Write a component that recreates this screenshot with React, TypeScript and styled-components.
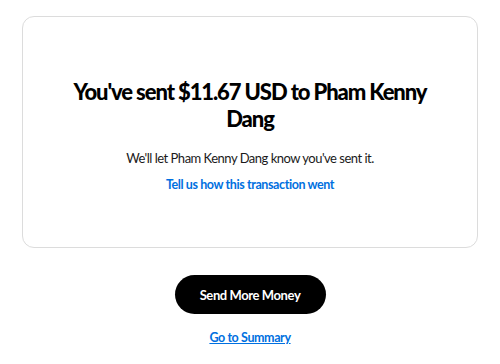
import React from "react";
import styled, { createGlobalStyle } from "styled-components";

const GlobalStyle = createGlobalStyle`
  body {
    margin: 0;
    background: #ffffff;
    font-family: Lato, "Liberation Sans", sans-serif;
    color: #000000;
  }
`;

const Page = styled.div`
  width: 500px;
  padding-top: 16px;
  display: flex;
  flex-direction: column;
  align-items: center;
`;

const Card = styled.div`
  box-sizing: border-box;
  width: 456px;
  height: 232px;
  border: 1px solid #dcdcdc;
  border-radius: 12px;
  padding: 61px 30px 0;
  display: flex;
  flex-direction: column;
  align-items: center;
  text-align: center;
`;

const Title = styled.h1`
  margin: 0;
  max-width: 380px;
  font-size: 22px;
  line-height: 27px;
  font-weight: 900;
  letter-spacing: -1.1px;
`;

const Message = styled.p`
  margin: 16px 0 0;
  font-size: 13px;
  line-height: 20px;
  letter-spacing: -0.5px;
  color: #1a1a1a;
`;

const TextLink = styled.a<{ $underline?: boolean }>`
  font-size: 12.5px;
  font-weight: 700;
  letter-spacing: -0.4px;
  color: #0070e0;
  text-decoration: ${({ $underline }) => ($underline ? "underline" : "none")};
  cursor: pointer;
`;

const FeedbackLink = styled(TextLink)`
  margin-top: 9px;
`;

const PrimaryButton = styled.button`
  margin-top: 27px;
  width: 151px;
  height: 39px;
  border: none;
  border-radius: 20px;
  background: #000000;
  color: #ffffff;
  font-family: inherit;
  font-size: 13px;
  font-weight: 700;
  letter-spacing: -0.4px;
  cursor: pointer;
`;

const SummaryLink = styled(TextLink)`
  margin-top: 16px;
`;

export default function App() {
  return (
    <>
      <GlobalStyle />
      <Page>
        <Card>
          <Title>You've sent $11.67 USD to Pham Kenny Dang</Title>
          <Message>We'll let Pham Kenny Dang know you've sent it.</Message>
          <FeedbackLink>Tell us how this transaction went</FeedbackLink>
        </Card>
        <PrimaryButton>Send More Money</PrimaryButton>
        <SummaryLink $underline>Go to Summary</SummaryLink>
      </Page>
    </>
  );
}
